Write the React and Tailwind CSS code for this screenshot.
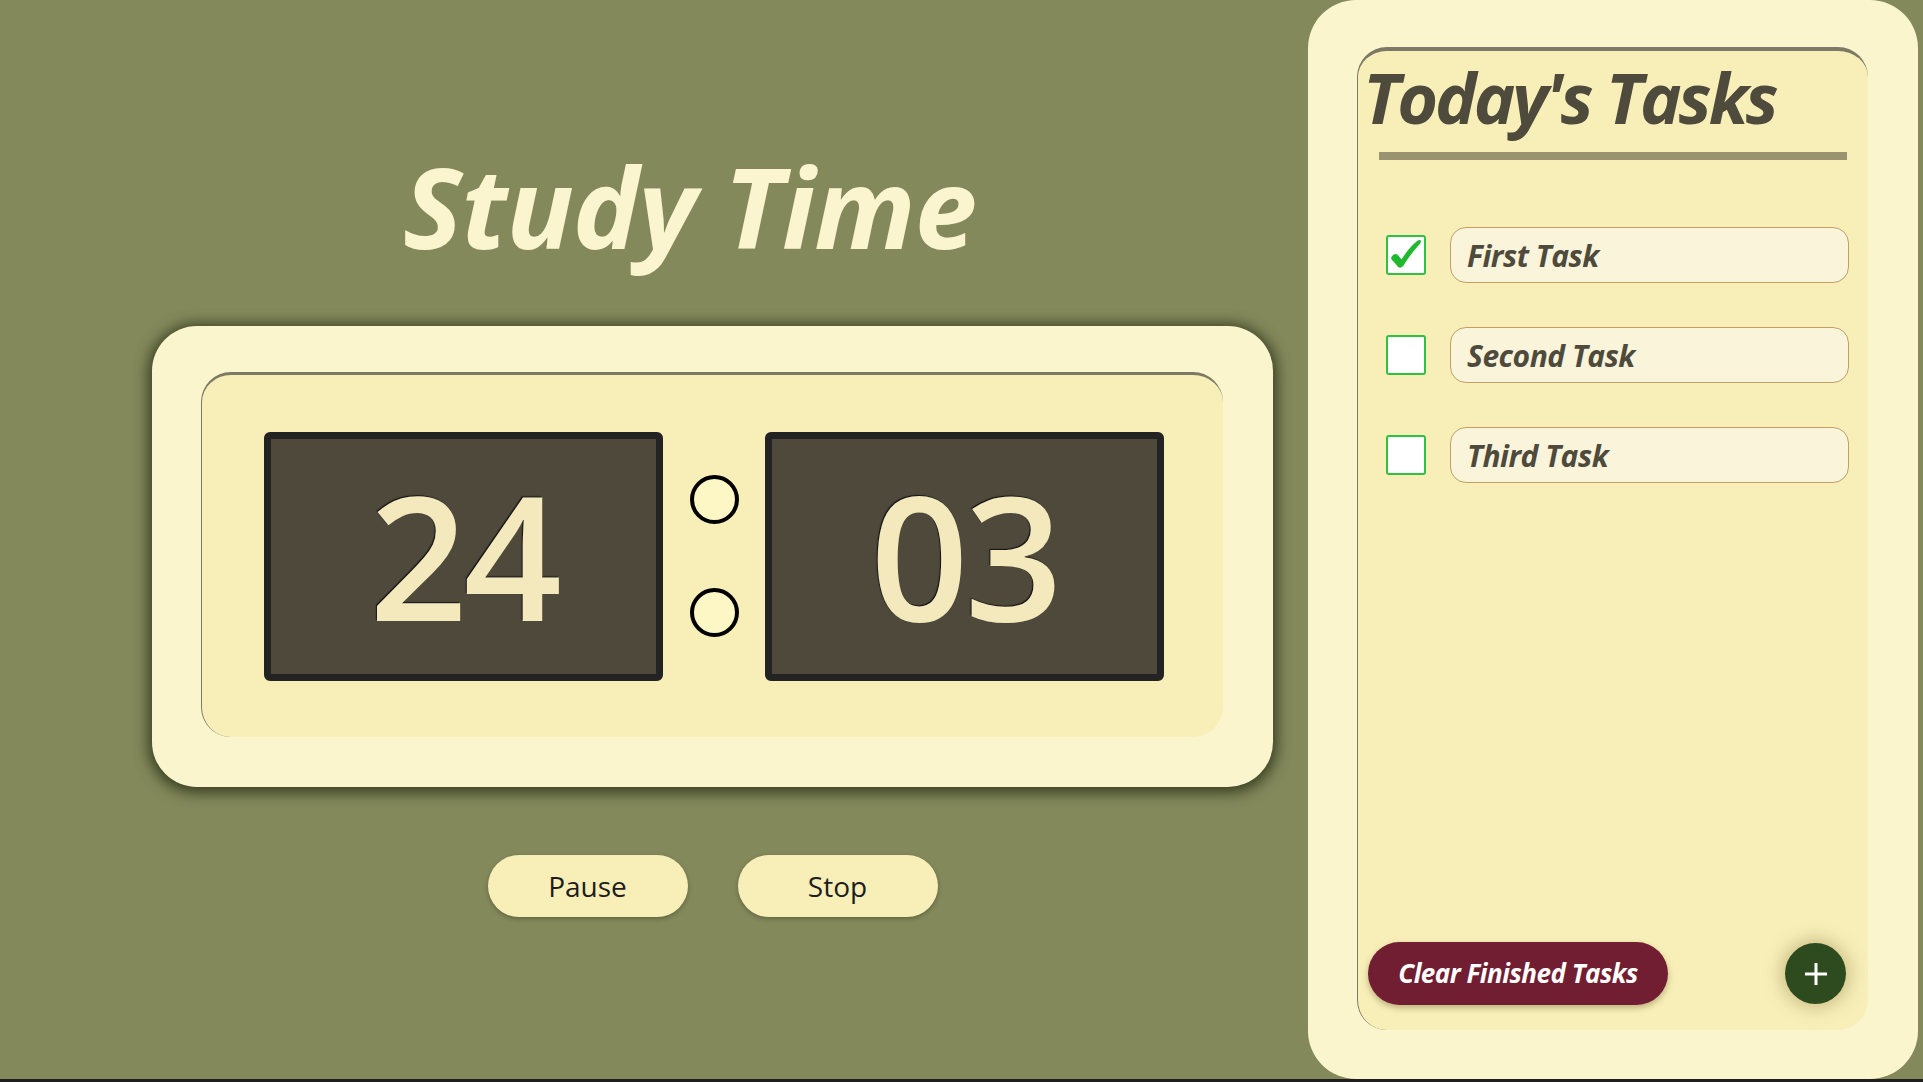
import React from 'react';

const tasks = [
  { id: 1, text: 'First Task', done: true },
  { id: 2, text: 'Second Task', done: false },
  { id: 3, text: 'Third Task', done: false },
];

const DigitBox = ({ value }) => (
  <div className="flex h-[249px] w-[399px] items-center justify-center rounded-md border-[7px] border-[#232323] bg-[#4e493b]">
    <span className="pb-1 text-[172px] font-semibold leading-none tracking-[-4px] text-[#f3e9bd] [text-shadow:-1px_-1px_1px_#111]">
      {value}
    </span>
  </div>
);

const TaskRow = ({ task }) => (
  <div className="flex items-center">
    <div className="ml-[28px] flex h-10 w-10 items-center justify-center rounded-[3px] border-2 border-[#2dc23f] bg-white">
      {task.done && (
        <svg width="36" height="36" viewBox="0 0 40 40">
          <path
            d="M4 22 Q7 17 11 20 L15 25 Q23 12 33 4 Q38 2 36 7 Q25 19 17 32 Q14 36 11 33 Q7 28 4 25 Q3 23 4 22 Z"
            fill="#1fb82e"
          />
        </svg>
      )}
    </div>
    <div className="ml-6 flex h-14 w-[399px] items-center rounded-2xl border-[1.5px] border-[#c0a063] bg-[#faf4da] pl-4">
      <span className="text-[30px] font-bold italic tracking-[-0.5px] text-[#4e4a3c]">{task.text}</span>
    </div>
  </div>
);

const App = () => {
  return (
    <div className="h-[1082px] w-full overflow-hidden bg-[#1f1f1f] font-['Open_Sans',sans-serif]">
      <div className="flex h-[1079px] bg-[#83895b]">
        {/* timer side */}
        <main className="w-[1308px] shrink-0">
          <div className="ml-[152px] flex w-[1121px] flex-col items-center">
            <h1 className="pr-[46px] pt-[150px] text-[112px] font-bold italic leading-none tracking-[-1px] text-[#fbf5cf]">
              Study Time
            </h1>
            <div className="mt-[64px] h-[461px] w-[1121px] rounded-[45px] bg-[#faf5cd] pb-[50px] pl-[49px] pr-[50px] pt-[46px] shadow-[0_2px_14px_4px_rgba(45,50,25,0.85)]">
              <div className="flex h-full items-center justify-center rounded-[30px] border-l border-t-[3px] border-[#7c7a66] bg-[#f8efb8] pl-[3px]">
                <DigitBox value="24" />
                <div className="flex w-[102px] flex-col items-center gap-16">
                  <div className="h-[49px] w-[49px] rounded-full border-4 border-black bg-[#fdf6c5]" />
                  <div className="h-[49px] w-[49px] rounded-full border-4 border-black bg-[#fdf6c5]" />
                </div>
                <DigitBox value="03" />
              </div>
            </div>
            <div className="mt-[68px] flex gap-[50px]">
              <button className="h-[62px] w-[200px] rounded-full bg-[#f8efb8] text-[28px] text-[#1d1d1d] shadow-[0_2px_4px_rgba(40,40,20,0.35)]">
                Pause
              </button>
              <button className="h-[62px] w-[200px] rounded-full bg-[#f8efb8] text-[28px] text-[#1d1d1d] shadow-[0_2px_4px_rgba(40,40,20,0.35)]">
                Stop
              </button>
            </div>
          </div>
        </main>

        {/* tasks side */}
        <aside className="h-full w-[610px] shrink-0 rounded-[48px] bg-[#faf5cd] pb-[49px] pl-[49px] pr-[50px] pt-[47px]">
          <div className="flex h-full flex-col rounded-[30px] border-l border-t-4 border-[#7c7a66] bg-[#f8efb8]">
            <h2 className="mt-[11px] pl-[5px] text-[70px] font-bold italic leading-none tracking-[-3px] text-[#4e4a3c]">
              Today's Tasks
            </h2>
            <div className="mx-[21px] mt-[20px] h-2 bg-[#9a9370]" />
            <div className="mt-[67px] flex flex-col gap-[44px]">
              {tasks.map((task) => (
                <TaskRow key={task.id} task={task} />
              ))}
            </div>
            <div className="mt-auto mb-[25px] flex items-center justify-between pl-[10px] pr-[22px]">
              <button className="h-[63px] w-[300px] rounded-full bg-[#711d32] text-[26px] font-bold italic tracking-[-0.5px] text-white shadow-[0_3px_6px_rgba(80,60,20,0.35)]">
                Clear Finished Tasks
              </button>
              <button className="flex h-[61px] w-[61px] items-center justify-center rounded-full bg-[#2e4a1f] shadow-[0_0_18px_4px_rgba(120,100,40,0.35)]">
                <svg width="26" height="26" viewBox="0 0 26 26">
                  <path d="M13 2v22M2 13h22" stroke="white" strokeWidth="3" />
                </svg>
              </button>
            </div>
          </div>
        </aside>
      </div>
    </div>
  );
};

export default App;
